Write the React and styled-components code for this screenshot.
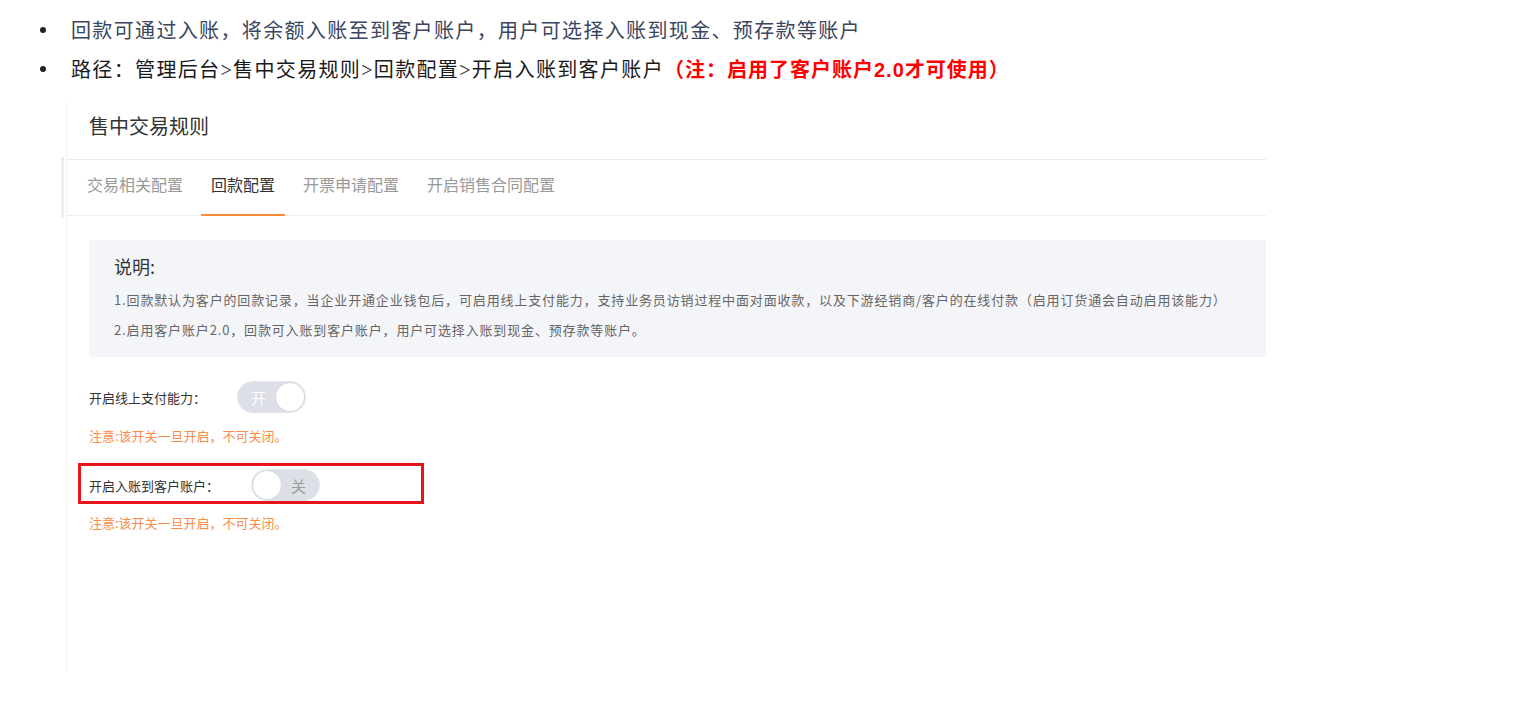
import React, { useState } from 'react';
import styled, { createGlobalStyle } from 'styled-components';

const GlobalStyle = createGlobalStyle`
  body {
    margin: 0;
    background: #fff;
    font-family: "Liberation Sans", "Noto Sans CJK SC", sans-serif;
  }
`;

const Page = styled.div`
  width: 1529px;
  height: 722px;
  overflow: hidden;
  padding-top: 10px;
  box-sizing: border-box;
`;

const Bullets = styled.ul`
  list-style: none;
  margin: 0;
  padding: 0 0 0 40px;
`;

const Bullet = styled.li`
  display: flex;
  align-items: center;
  height: 39px;
  font-size: 20px;
  font-family: "Liberation Serif", "Noto Sans CJK SC", serif;
  color: ${(p) => p.color || '#1a1a1a'};
  letter-spacing: 1.35px;

  &::before {
    content: "";
    width: 6px;
    height: 6px;
    border-radius: 50%;
    background: #222;
    margin-right: 25px;
    flex-shrink: 0;
  }
`;

const Note = styled.span`
  color: #ff0000;
  font-weight: bold;
  font-family: "Liberation Sans", "Noto Sans CJK SC", sans-serif;
  letter-spacing: 1px;
`;

const Panel = styled.div`
  position: relative;
  margin: 14px 0 0 66px;
  width: 1199px;
  height: 570px;
  border-left: 1px solid #f2f2f2;
  font-family: "Noto Sans CJK SC", "Liberation Sans", sans-serif;
  color: #333;

  &::before {
    content: "";
    position: absolute;
    left: -6px;
    top: 55px;
    width: 3px;
    height: 61px;
    background: #eeeeee;
  }
`;

const PanelHeader = styled.div`
  height: 58px;
  display: flex;
  align-items: center;
  padding: 0 0 10px 22px;
  box-sizing: border-box;
  font-size: 20px;
  color: #333;
  border-bottom: 1px solid #ececec;
`;

const Tabs = styled.div`
  display: flex;
  gap: 8px;
  height: 55px;
  padding-left: 10px;
  border-bottom: 1px solid #eeeeee;
`;

const Tab = styled.div`
  display: flex;
  align-items: center;
  padding: 0 10px 6px;
  font-size: 16px;
  color: ${(p) => (p.active ? '#333' : '#999')};
  border-bottom: 2px solid ${(p) => (p.active ? '#fa8c3c' : 'transparent')};
  margin-bottom: -1px;
`;

const Body = styled.div`
  padding: 24px 0 0 22px;
`;

const InfoBox = styled.div`
  background: #f4f5f9;
  border-radius: 4px 0 0 4px;
  padding: 13px 0 12px 25px;
`;

const InfoTitle = styled.div`
  font-size: 18px;
  line-height: 26px;
  margin-bottom: 6px;
`;

const InfoLine = styled.div`
  font-size: 13px;
  line-height: 30px;
  color: #666;
  letter-spacing: 0.85px;
  white-space: nowrap;
`;

const Row = styled.div`
  display: flex;
  align-items: center;
  height: 32px;
  font-size: 13px;
  color: #333;
  ${(p) =>
    p.marked &&
    `
    width: 332px;
    margin-left: -11px;
    padding: 3px 0 0 8px;
    border: 3px solid #e8141c;
  `}
`;

const Label = styled.span`
  width: ${(p) => p.width}px;
`;

const Switch = styled.button`
  position: relative;
  width: 69px;
  height: 32px;
  border-radius: 16px;
  border: 1px solid #e3e5ea;
  background: #dcdfe6;
  padding: 0;
  cursor: pointer;
  display: flex;
  align-items: center;
  justify-content: ${(p) => (p.on ? 'flex-start' : 'flex-end')};
  font-family: inherit;
  font-size: 15px;
  color: ${(p) => (p.on ? '#fff' : '#999')};
  box-sizing: border-box;
`;

const SwitchText = styled.span`
  padding: ${(p) => (p.on ? '0 0 0 13px' : '0 13px 0 0')};
`;

const Knob = styled.span`
  position: absolute;
  top: 1px;
  left: ${(p) => (p.on ? '38px' : '1px')};
  width: 28px;
  height: 28px;
  border-radius: 50%;
  background: #fff;
  box-shadow: 0 0 1px rgba(0, 0, 0, 0.15);
`;

const Warn = styled.div`
  font-size: 13px;
  line-height: 20px;
  color: #fa8c4b;
  margin: ${(p) => p.top}px 0 0;
`;

const Spacer = styled.div`
  height: ${(p) => p.h}px;
`;

function Toggle({ initial }) {
  const [on, setOn] = useState(initial);
  return (
    <Switch on={on ? 1 : 0} onClick={() => setOn(!on)}>
      <SwitchText on={on ? 1 : 0}>{on ? '开' : '关'}</SwitchText>
      <Knob on={on ? 1 : 0} />
    </Switch>
  );
}

const tabs = ['交易相关配置', '回款配置', '开票申请配置', '开启销售合同配置'];

export default function App() {
  return (
    <Page>
      <GlobalStyle />
      <Bullets>
        <Bullet color="#3a4560">回款可通过入账，将余额入账至到客户账户，用户可选择入账到现金、预存款等账户</Bullet>
        <Bullet>
          路径：管理后台&gt;售中交易规则&gt;回款配置&gt;开启入账到客户账户
          <Note>（注：启用了客户账户2.0才可使用）</Note>
        </Bullet>
      </Bullets>
      <Panel>
        <PanelHeader>售中交易规则</PanelHeader>
        <Tabs>
          {tabs.map((t) => (
            <Tab key={t} active={t === '回款配置' ? 1 : 0}>{t}</Tab>
          ))}
        </Tabs>
        <Body>
          <InfoBox>
            <InfoTitle>说明:</InfoTitle>
            <InfoLine>1.回款默认为客户的回款记录，当企业开通企业钱包后，可启用线上支付能力，支持业务员访销过程中面对面收款，以及下游经销商/客户的在线付款（启用订货通会自动启用该能力）</InfoLine>
            <InfoLine>2.启用客户账户2.0，回款可入账到客户账户，用户可选择入账到现金、预存款等账户。</InfoLine>
          </InfoBox>
          <Spacer h={24} />
          <Row>
            <Label width={148}>开启线上支付能力：</Label>
            <Toggle initial={true} />
          </Row>
          <Warn top={13}>注意:该开关一旦开启，不可关闭。</Warn>
          <Spacer h={17} />
          <Row marked>
            <Label width={162}>开启入账到客户账户：</Label>
            <Toggle initial={false} />
          </Row>
          <Warn top={9}>注意:该开关一旦开启，不可关闭。</Warn>
        </Body>
      </Panel>
    </Page>
  );
}
